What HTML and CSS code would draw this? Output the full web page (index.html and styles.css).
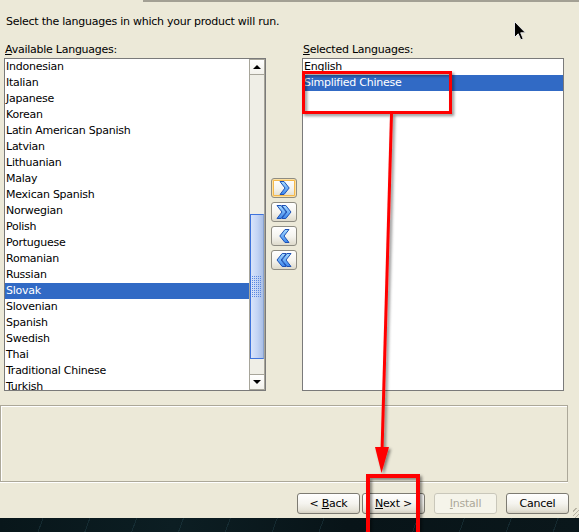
FILE: index.html
```html
<!DOCTYPE html>
<html lang="en">
<head>
<meta charset="utf-8">
<title>Select Languages</title>
<link rel="stylesheet" href="styles.css">
</head>
<body>
<div class="window">
  <div class="topedge"></div>
  <p class="intro">Select the languages in which your product will run.</p>
  <div class="panes">
    <div class="pane">
      <div class="label"><u>A</u>vailable Languages:</div>
      <div class="listbox">
        <ul class="list">
          <li>Indonesian</li>
          <li>Italian</li>
          <li>Japanese</li>
          <li>Korean</li>
          <li>Latin American Spanish</li>
          <li>Latvian</li>
          <li>Lithuanian</li>
          <li>Malay</li>
          <li>Mexican Spanish</li>
          <li>Norwegian</li>
          <li>Polish</li>
          <li>Portuguese</li>
          <li>Romanian</li>
          <li>Russian</li>
          <li class="sel">Slovak</li>
          <li>Slovenian</li>
          <li>Spanish</li>
          <li>Swedish</li>
          <li>Thai</li>
          <li>Traditional Chinese</li>
          <li>Turkish</li>
        </ul>
        <div class="scrollbar">
          <div class="sb-btn up"></div>
          <div class="sb-track">
            <div class="sb-space-top"></div>
            <div class="sb-thumb"><div class="sb-grip"></div></div>
            <div class="sb-space-bottom"></div>
          </div>
          <div class="sb-btn down"></div>
        </div>
      </div>
    </div>
    <div class="movers">
      <button class="mover focus" aria-label="Add">
        <svg width="11" height="14" viewBox="0 0 11 14"><defs><linearGradient id="g1" x1="0" y1="0" x2="0" y2="1"><stop offset="0" stop-color="#a8dcff"/><stop offset="1" stop-color="#3a86ee"/></linearGradient></defs><polygon points="1,0.5 5,0.5 10.2,7 5,13.5 1,13.5 6,7" fill="url(#g1)" stroke="#1d51b5"/></svg>
      </button>
      <button class="mover" aria-label="Add all">
        <svg width="16" height="14" viewBox="0 0 16 14"><defs><linearGradient id="g2" x1="0" y1="0" x2="0" y2="1"><stop offset="0" stop-color="#a8dcff"/><stop offset="1" stop-color="#3a86ee"/></linearGradient></defs><polygon points="1,0.5 5,0.5 10.2,7 5,13.5 1,13.5 6,7" fill="url(#g2)" stroke="#1d51b5"/><polygon points="5.8,0.5 9.8,0.5 15,7 9.8,13.5 5.8,13.5 10.8,7" fill="url(#g2)" stroke="#1d51b5"/></svg>
      </button>
      <button class="mover" aria-label="Remove">
        <svg width="11" height="14" viewBox="0 0 11 14"><defs><linearGradient id="g3" x1="0" y1="0" x2="0" y2="1"><stop offset="0" stop-color="#a8dcff"/><stop offset="1" stop-color="#3a86ee"/></linearGradient></defs><polygon points="10,0.5 6,0.5 0.8,7 6,13.5 10,13.5 5,7" fill="url(#g3)" stroke="#1d51b5"/></svg>
      </button>
      <button class="mover" aria-label="Remove all">
        <svg width="16" height="14" viewBox="0 0 16 14"><defs><linearGradient id="g4" x1="0" y1="0" x2="0" y2="1"><stop offset="0" stop-color="#a8dcff"/><stop offset="1" stop-color="#3a86ee"/></linearGradient></defs><polygon points="15,0.5 11,0.5 5.8,7 11,13.5 15,13.5 10,7" fill="url(#g4)" stroke="#1d51b5"/><polygon points="10.2,0.5 6.2,0.5 1,7 6.2,13.5 10.2,13.5 5.2,7" fill="url(#g4)" stroke="#1d51b5"/></svg>
      </button>
    </div>
    <div class="pane">
      <div class="label"><u>S</u>elected Languages:</div>
      <div class="listbox">
        <ul class="list">
          <li>English</li>
          <li class="sel">Simplified Chinese</li>
        </ul>
      </div>
    </div>
  </div>
  <div class="message"></div>
  <div class="actions">
    <button class="btn">&lt; <u>B</u>ack</button>
    <button class="btn btn-next"><u>N</u>ext &gt;</button>
    <button class="btn btn-install" disabled><u>I</u>nstall</button>
    <button class="btn btn-cancel">Cancel</button>
    <div class="resize-grip"></div>
  </div>
</div>
<div class="desktop"></div>

<svg class="annot" width="579" height="532" viewBox="0 0 579 532">
  <defs>
    <filter id="sh" x="-20%" y="-20%" width="140%" height="140%">
      <feDropShadow dx="2" dy="2" stdDeviation="1.5" flood-color="#000" flood-opacity="0.45"/>
    </filter>
  </defs>
  <g filter="url(#sh)">
    <rect x="303.5" y="72.5" width="147" height="40" fill="none" stroke="#ff0000" stroke-width="3"/>
    <line x1="391.5" y1="114" x2="382" y2="452" stroke="#ff0000" stroke-width="3"/>
    <polygon points="375,447 389,447 381.5,473" fill="#ff0000"/>
    <rect x="368" y="476" width="50" height="70" fill="none" stroke="#ff0000" stroke-width="4"/>
  </g>
</svg>

<svg class="cursor" width="14" height="21" viewBox="0 0 14 21">
  <path d="M0.5,0.5 L0.5,16.5 L4.2,12.8 L6.8,18.8 L9.2,17.8 L6.7,11.8 L11.5,11.8 Z" fill="#000" stroke="#e8e8e8" stroke-width="1"/>
</svg>
</body>
</html>
```

FILE: styles.css
```css
* { box-sizing: border-box; }

html, body {
  margin: 0;
  padding: 0;
}

body {
  width: 579px;
  height: 532px;
  overflow: hidden;
  position: relative;
  background: #ece9d8;
  font-family: "DejaVu Sans", "Liberation Sans", sans-serif;
  font-size: 11px;
  letter-spacing: -0.25px;
  color: #000;
}

.window {
  height: 518px;
  display: flex;
  flex-direction: column;
}

.topedge {
  height: 2px;
  margin-left: 143px;
  background: #a3a094;
  flex: none;
}

.intro {
  margin: 12px 0 0 6px;
  height: 16px;
  line-height: 16px;
  flex: none;
}

.panes {
  display: flex;
  gap: 5px;
  padding-left: 4px;
  margin-top: 12px;
  flex: none;
}

.pane {
  display: flex;
  flex-direction: column;
  width: 262px;
}

.label {
  height: 16px;
  line-height: 16px;
  padding-left: 1px;
}

.listbox {
  height: 333px;
  border: 1px solid #7a7a7a;
  background: #fff;
  display: flex;
}

.list {
  flex: 1;
  margin: 0;
  padding: 0;
  list-style: none;
  overflow: hidden;
}

.list li {
  height: 16px;
  line-height: 16px;
  padding-left: 1px;
  white-space: nowrap;
}

.list li.sel {
  background: #316ac5;
  color: #fff;
}

.scrollbar {
  width: 16px;
  flex: none;
  display: flex;
  flex-direction: column;
}

.sb-btn {
  height: 16px;
  flex: none;
  border: 1px solid #a7a59a;
  background: linear-gradient(#ffffff, #f3f2ec);
  display: flex;
  align-items: center;
  justify-content: center;
}

.sb-btn::after {
  content: "";
  border-left: 4px solid transparent;
  border-right: 4px solid transparent;
}

.sb-btn.up::after { border-bottom: 4px solid #000; }
.sb-btn.down::after { border-top: 4px solid #000; }

.sb-track {
  flex: 1;
  display: flex;
  flex-direction: column;
  background: #efeee6;
  border-left: 1px solid #a7a59a;
  border-right: 1px solid #a7a59a;
}

.sb-space-top { height: 139px; }
.sb-space-bottom { height: 15px; }

.sb-thumb {
  height: 145px;
  border: 1px solid #3f73dc;
  border-right-color: #8aa3cf;
  background: linear-gradient(to right, #d9e4fa, #c2d3f4 55%, #aabfe6);
  display: flex;
  align-items: center;
  justify-content: center;
}

.sb-grip {
  width: 10px;
  height: 22px;
  background-image: conic-gradient(at 1px 1px, transparent 75%, #5b87e0 0);
  background-size: 2px 2px;
}

.movers {
  width: 26px;
  display: flex;
  flex-direction: column;
  justify-content: center;
  gap: 4px;
  padding-top: 14px;
}

.mover {
  width: 26px;
  height: 20px;
  padding: 0;
  border: 1px solid #8e8c82;
  border-radius: 3px;
  background: linear-gradient(#ffffff, #f4f3ee 55%, #dedacb);
  display: flex;
  align-items: center;
  justify-content: center;
}

.mover.focus {
  box-shadow: inset 0 0 0 1px #fde0a0, inset 0 0 0 2px #f4b84c;
}

.message {
  margin-top: 14px;
  height: 77px;
  width: 568px;
  border: 1px solid #aca899;
  box-shadow: inset 1px 1px 0 #fff, 0 1px 0 #fff;
  flex: none;
}

.actions {
  display: flex;
  align-items: flex-start;
  justify-content: flex-end;
  padding-top: 11px;
  height: 36px;
  flex: none;
}

.btn {
  width: 63px;
  height: 21px;
  padding: 0;
  border: 1px solid #7d7b72;
  border-radius: 3px;
  background: linear-gradient(#ffffff, #f5f4ef 50%, #e6e3d8 85%, #d4d0c2);
  font-family: "DejaVu Sans", "Liberation Sans", sans-serif;
  font-size: 11px;
  letter-spacing: -0.25px;
  color: #000;
}

.btn-next { margin-left: 2px; }
.btn-install, .btn-cancel { margin-left: 9px; }

.btn:disabled {
  color: #aca899;
  border-color: #c9c7ba;
  background: #f5f4ea;
}

.resize-grip {
  align-self: flex-end;
  width: 6px;
  height: 10px;
  margin-left: 4px;
  background: repeating-linear-gradient(135deg, transparent 0 2px, #b8b4a4 2px 3px);
}

.desktop {
  height: 14px;
  background:
    repeating-linear-gradient(110deg, transparent 0 40px, rgba(40, 75, 85, 0.35) 40px 41px, transparent 41px 44px),
    linear-gradient(90deg, #08161a, #0c1e23 30%, #081418 60%, #0a171b);
}

.annot {
  position: absolute;
  left: 0;
  top: 0;
  pointer-events: none;
}

.cursor {
  position: absolute;
  left: 514px;
  top: 21px;
  pointer-events: none;
}
```
